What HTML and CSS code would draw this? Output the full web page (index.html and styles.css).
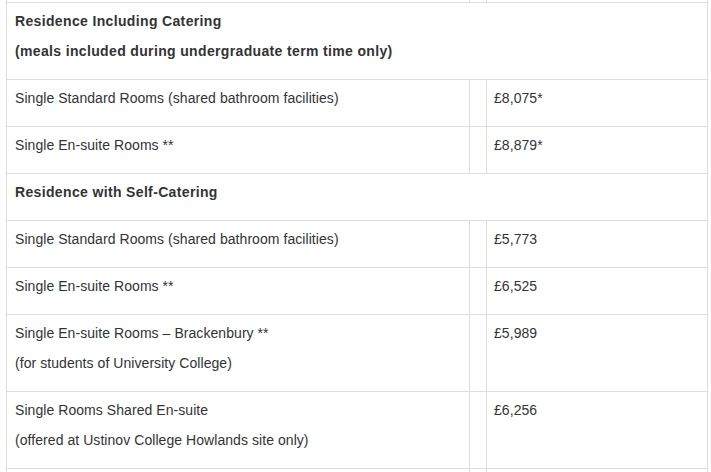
FILE: index.html
```html
<!DOCTYPE html>
<html lang="en">
<head>
<meta charset="utf-8">
<title>Accommodation charges</title>
<link rel="stylesheet" href="styles.css">
</head>
<body>
<div class="fees">
  <div class="cell c1 spacer"></div><div class="cell c2 spacer"></div><div class="cell c3 spacer"></div>

  <div class="cell head">
    <p>Residence Including Catering</p>
    <p>(meals included during undergraduate term time only)</p>
  </div>

  <div class="cell c1"><p>Single Standard Rooms (shared bathroom facilities)</p></div>
  <div class="cell c2"></div>
  <div class="cell c3"><p>£8,075*</p></div>

  <div class="cell c1"><p>Single En-suite Rooms **</p></div>
  <div class="cell c2"></div>
  <div class="cell c3"><p>£8,879*</p></div>

  <div class="cell head">
    <p>Residence with Self-Catering</p>
  </div>

  <div class="cell c1"><p>Single Standard Rooms (shared bathroom facilities)</p></div>
  <div class="cell c2"></div>
  <div class="cell c3"><p>£5,773</p></div>

  <div class="cell c1"><p>Single En-suite Rooms **</p></div>
  <div class="cell c2"></div>
  <div class="cell c3"><p>£6,525</p></div>

  <div class="cell c1"><p>Single En-suite Rooms – Brackenbury **</p><p>(for students of University College)</p></div>
  <div class="cell c2"></div>
  <div class="cell c3"><p>£5,989</p></div>

  <div class="cell c1"><p>Single Rooms Shared En-suite</p><p>(offered at Ustinov College Howlands site only)</p></div>
  <div class="cell c2"></div>
  <div class="cell c3"><p>£6,256</p></div>

  <div class="cell c1 tail"></div>
  <div class="cell c2 tail"></div>
  <div class="cell c3 tail"></div>
</div>
</body>
</html>
```
FILE: styles.css
```css
html, body {
  margin: 0;
  padding: 0;
  background: #fff;
}

body {
  font-family: "Liberation Sans", Arial, sans-serif;
  font-size: 14px;
  line-height: 20px;
  color: #333;
  overflow: hidden;
  height: 472px;
}

.fees {
  display: grid;
  grid-template-columns: 464px 17px 221px;
  margin-left: 6px;
  width: 702px;
}

.cell {
  box-sizing: border-box;
  border-right: 1px solid #ddd;
  border-bottom: 1px solid #ddd;
  padding: 8px 8px 8px 8px;
}

.c1, .head {
  border-left: 1px solid #ddd;
}

.c2 {
  padding: 0;
}

.c3 {
  padding-left: 7px;
}

.head {
  grid-column: 1 / -1;
  font-weight: bold;
  letter-spacing: 0.35px;
}

.spacer {
  height: 3px;
  padding: 0;
}

.tail {
  height: 46px;
}

.cell p {
  margin: 0 0 10px 0;
  letter-spacing: 0.06px;
}

.head p {
  letter-spacing: 0.35px;
}
```
